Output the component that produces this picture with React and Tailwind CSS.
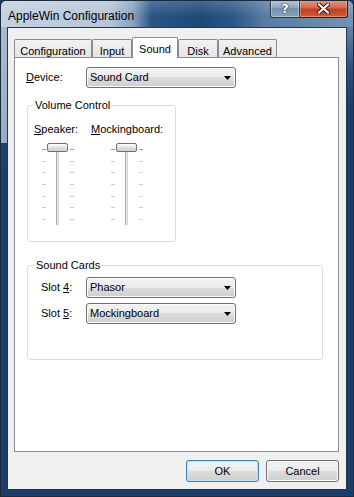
import React from 'react';

const BTN_BG =
  'bg-[linear-gradient(#f2f2f2_0%,#ebebeb_50%,#dddddd_50%,#cfcfcf_100%)]';

function Key({ children }) {
  return <span className="underline underline-offset-[1px]">{children}</span>;
}

function Combo({ value }) {
  return (
    <div
      className={`flex h-[21px] w-[150px] items-center justify-between rounded-[3px] border border-[#707070] ${BTN_BG} pl-[3px] pr-[4px] shadow-[inset_0_0_0_1px_#fbfbfb]`}
    >
      <span className="leading-none">{value}</span>
      <svg width="7" height="4" viewBox="0 0 7 4">
        <path d="M0 0h7L3.5 4z" fill="#000" />
      </svg>
    </div>
  );
}

function Tab({ label, w, active }) {
  if (active) {
    return (
      <div
        className={`relative z-10 -mb-px flex h-[21px] justify-center rounded-t-[2px] border border-b-0 border-[#898c95] bg-white pt-[3px] ${w}`}
      >
        {label}
      </div>
    );
  }
  return (
    <div
      className={`flex h-[18px] justify-center rounded-t-[2px] border border-b-0 border-[#898c95] bg-[linear-gradient(#f3f3f3,#e4e4e4)] pt-[3px] ${w}`}
    >
      {label}
    </div>
  );
}

function Slider() {
  const ticks = [7, 19, 30, 42, 54, 65, 77];
  return (
    <svg width="34" height="84" viewBox="0 0 34 84">
      <defs>
        <linearGradient id="thumb" x1="0" y1="0" x2="0" y2="1">
          <stop offset="0" stopColor="#f7f7f7" />
          <stop offset="0.5" stopColor="#ececec" />
          <stop offset="0.5" stopColor="#dedede" />
          <stop offset="1" stopColor="#d2d2d2" />
        </linearGradient>
      </defs>
      {ticks.map((y, i) => (
        <g key={y} stroke={i === 0 ? '#a0a0a0' : '#cdcdcd'} strokeWidth="1">
          <path d={`M1 ${y + 0.5}h4`} />
          <path d={`M29 ${y + 0.5}h4`} />
        </g>
      ))}
      <rect x="15" y="2" width="3" height="81" fill="#e8e8e8" />
      <path d="M15.5 2v81" stroke="#a9a9a9" />
      <path d="M17.5 2v81" stroke="#d6d6d6" />
      <rect x="6.5" y="1.5" width="20" height="8" rx="1.5" fill="url(#thumb)" stroke="#6f6f6f" />
      <path d="M8 2.5h17" stroke="#ffffff" />
    </svg>
  );
}

export default function App() {
  return (
    <div className="h-[497px] w-[354px] bg-[#1a3d6b] font-['Liberation_Sans',Arial,sans-serif] text-[11px] text-black">
      <div className="flex h-full w-full flex-col overflow-hidden rounded-t-[6px] border border-[#1d2a3b] bg-[#1a3d6b]">
        {/* title bar */}
        <div className="flex h-[26px] shrink-0 items-start justify-between bg-[linear-gradient(to_bottom,rgba(255,255,255,0.18),rgba(255,255,255,0)_60%),linear-gradient(to_right,#c3d1e0_0px,#b6c6d9_108px,#8aa3c0_132px,#2b5585_150px,#1f4877_200px,#2d5686_232px,#5a7ca4_265px,#7391b3_352px)]">
          <div className="pl-[7px] pt-[8px] text-[12px] leading-[14px]">AppleWin Configuration</div>
          <div className="-mt-px mr-[5px] flex">
            <div className="flex h-[18px] w-[30px] items-center justify-center rounded-bl-[3px] border border-t-0 border-[#2b394b] bg-[linear-gradient(#b8c7d7,#8ea4bd_50%,#7890ab_50%,#8aa1bb)] shadow-[inset_0_0_0_1px_rgba(255,255,255,0.35)]">
              <span className="font-['DejaVu_Sans',sans-serif] text-[13px] font-bold leading-none text-white [text-shadow:0_0_1px_#1d2a3b,0_0_1px_#1d2a3b,0_0_1px_#1d2a3b]">
                ?
              </span>
            </div>
            <div className="flex h-[18px] w-[48px] items-center justify-center rounded-br-[3px] border border-l-0 border-t-0 border-[#3b1a12] bg-[linear-gradient(#e29a88,#d06a52_45%,#c0401f_55%,#cf5a3a)] shadow-[inset_0_0_0_1px_rgba(255,255,255,0.3)]">
              <svg width="13" height="11" viewBox="0 0 13 11">
                <path d="M2 1.5l9 8M11 1.5l-9 8" stroke="#3a1a12" strokeWidth="4" strokeLinecap="square" />
                <path d="M2 1.5l9 8M11 1.5l-9 8" stroke="#ffffff" strokeWidth="2" strokeLinecap="square" />
              </svg>
            </div>
          </div>
        </div>

        <div className="flex h-[463px] shrink-0">
          <div className="w-[6px] bg-[linear-gradient(to_bottom,#a8bad0_0px,#97adc7_116px,#1c406e_116px,#1a3d6b_100%)]" />
          {/* client */}
          <div className="flex w-[340px] flex-col border border-[#26374d] bg-[#f0f0f0] pt-[9px]">
            <div className="flex h-[20px] items-end pl-[6px]">
              <Tab label="Configuration" w="w-[78px]" />
              <Tab label="Input" w="w-[40px]" />
              <Tab label="Sound" w="w-[46px]" active />
              <Tab label="Disk" w="w-[40px]" />
              <Tab label="Advanced" w="w-[59px]" />
            </div>
            <div className="ml-[6px] flex h-[395px] w-[325px] flex-col border border-[#898c95] bg-white">
              <div className="mt-[9px] flex h-[21px] items-center">
                <div className="w-[71px] pl-[11px]">
                  <Key>D</Key>evice:
                </div>
                <Combo value="Sound Card" />
              </div>

              <fieldset className="ml-[12px] mt-[11px] h-[143px] w-[149px] rounded-[3px] border border-[#d5dfe5]">
                <legend className="ml-[5px] px-[2px] leading-[13px]">Volume Control</legend>
                <div className="mt-[11px] flex pl-[6px] leading-[13px]">
                  <div className="w-[57px]">
                    <Key>S</Key>peaker:
                  </div>
                  <div>
                    <Key>M</Key>ockingboard:
                  </div>
                </div>
                <div className="mt-[6px] flex gap-[35px] pl-[13px]">
                  <Slider />
                  <Slider />
                </div>
              </fieldset>

              <fieldset className="ml-[12px] mt-[17px] h-[101px] w-[296px] rounded-[3px] border border-[#d5dfe5]">
                <legend className="ml-[6px] px-[2px] leading-[13px]">Sound Cards</legend>
                <div className="mt-[5px] flex h-[21px] items-center pl-[13px]">
                  <div className="w-[45px]">
                    Slot <Key>4</Key>:
                  </div>
                  <Combo value="Phasor" />
                </div>
                <div className="mt-[5px] flex h-[21px] items-center pl-[13px]">
                  <div className="w-[45px]">
                    Slot <Key>5</Key>:
                  </div>
                  <Combo value="Mockingboard" />
                </div>
              </fieldset>
            </div>

            <div className="mt-[8px] flex justify-end gap-[7px] pr-[7px]">
              <button
                type="button"
                className={`h-[22px] w-[73px] rounded-[3px] border border-[#3c7fb1] ${BTN_BG} shadow-[inset_0_0_0_1px_#bfe3f7]`}
              >
                OK
              </button>
              <button
                type="button"
                className={`h-[22px] w-[73px] rounded-[3px] border border-[#707070] ${BTN_BG} shadow-[inset_0_0_0_1px_#fbfbfb]`}
              >
                Cancel
              </button>
            </div>
          </div>
          <div className="w-[6px] bg-[linear-gradient(to_bottom,#6483aa_0px,#2a5180_40px,#1a3d6b_80px)]" />
        </div>
        <div className="h-[6px] shrink-0" />
      </div>
    </div>
  );
}
